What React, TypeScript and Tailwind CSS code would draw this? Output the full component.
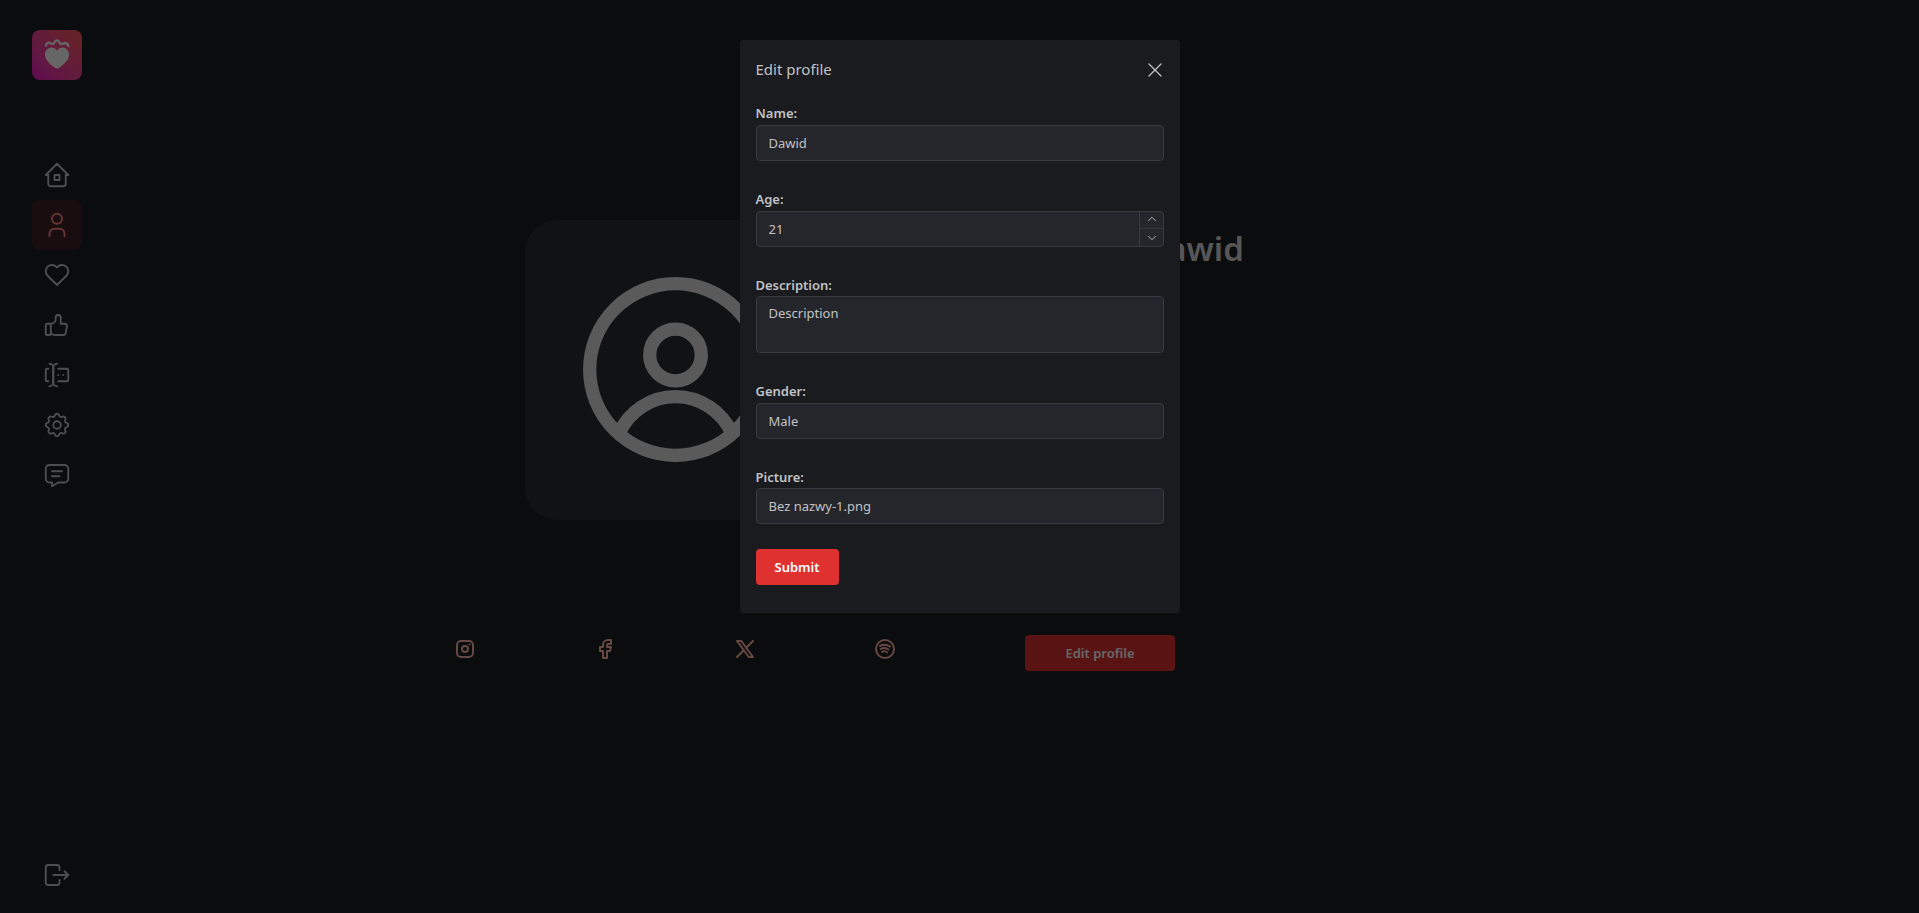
import {
  TbBrandFacebook,
  TbBrandInstagram,
  TbBrandSpotify,
  TbBrandX,
  TbChevronDown,
  TbChevronUp,
  TbForms,
  TbHeart,
  TbHome2,
  TbLogout,
  TbMessage,
  TbSettings,
  TbThumbUp,
  TbUser,
  TbX,
} from "react-icons/tb";

const navItems = [
  { icon: TbHome2, active: false },
  { icon: TbUser, active: true },
  { icon: TbHeart, active: false },
  { icon: TbThumbUp, active: false },
  { icon: TbForms, active: false },
  { icon: TbSettings, active: false },
  { icon: TbMessage, active: false },
];

const socials = [TbBrandInstagram, TbBrandFacebook, TbBrandX, TbBrandSpotify];

const inputClass =
  "h-9 w-full rounded-[4px] border border-[#373a40] bg-[#25262b] px-3 text-[13px] text-[#c1c2c5] outline-none";

const Logo = () => (
  <div className="flex h-[50px] w-[50px] items-center justify-center rounded-lg bg-gradient-to-tr from-[#f010c8] to-[#ff5a50]">
    <svg width="50" height="50" viewBox="0 0 50 50" fill="none">
      <path
        d="M25 38.5c-1 0-2-.6-3.2-1.5C17 33.5 13 29.500 13 24.500c0-4 3-7 6.500-7 2.300 0 4.300 1.100 5.500 3 1.200-1.900 3.200-3 5.500-3 3.500 0 6.500 3 6.500 7 0 5-4 9-8.800 12.500-1.200.9-2.200 1.500-3.200 1.500z"
        fill="#fff"
      />
      <path
        d="M14 15.500c.5-2.500 2.500-3.500 4-2.500 2 1.300 3.500 1.300 4.500-.5 1-2 2.500-2.800 4-1.500 1 1 1 2.500 2.500 3 1.500.4 2.500-1 3.700-1 1.500 0 3.300 1.200 3.800 3"
        stroke="#fff"
        strokeWidth="2.300"
        strokeLinecap="round"
      />
    </svg>
  </div>
);

const Sidebar = () => (
  <aside className="flex h-[913px] w-[114px] shrink-0 flex-col pb-[13px] pl-8 pt-[30px]">
    <Logo />
    <nav className="mt-[70px] flex flex-col">
      {navItems.map(({ icon: Icon, active }, i) => (
        <div
          key={i}
          className={`flex h-[50px] w-[50px] items-center justify-center rounded-lg ${
            active ? "bg-[#e03131]/20 text-[#ff8787]" : "text-[#c1c2c5]"
          }`}
        >
          <Icon size={30} strokeWidth={1.5} />
        </div>
      ))}
    </nav>
    <div className="mt-auto flex h-[50px] w-[50px] items-center justify-center text-[#c1c2c5]">
      <TbLogout size={30} strokeWidth={1.5} />
    </div>
  </aside>
);

const AvatarIcon = () => (
  <svg width="200" height="200" viewBox="-100.500 -99.500 200 200" fill="none" stroke="#e0e0e0" strokeWidth="13.300">
    <circle cx="0" cy="0" r="85.800" />
    <circle cx="0" cy="-14.500" r="25.800" />
    <path d="M-56.700 64.400A61.800 61.800 0 0 1 56.700 64.400" />
  </svg>
);

const Profile = () => (
  <main className="flex-1 pt-[220px]">
    <div className="flex items-start pl-[411px]">
      <div className="flex h-[300px] w-[300px] items-center justify-center rounded-[32px] bg-[#2c2e33]">
        <AvatarIcon />
      </div>
      <h1 className="ml-[318px] mt-[7px] text-[33px] font-semibold leading-[44px] text-[#d8d8da]">Dawid</h1>
    </div>
    <div className="mt-[115px] flex items-start pl-[339px]">
      {socials.map((Icon, i) => (
        <div key={i} className="mt-[2px] flex w-[140px] justify-start text-[#ffb4a8]">
          <Icon size={24} strokeWidth={2} />
        </div>
      ))}
      <button className="ml-[12px] h-9 w-[150px] rounded-[4px] bg-[#e03131] pt-[1px] text-[13px] font-semibold text-white">
        Edit profile
      </button>
    </div>
  </main>
);

const Field = ({
  label,
  children,
  className = "mb-[28px]",
}: {
  label: string;
  children: React.ReactNode;
  className?: string;
}) => (
  <div className={className}>
    <label className="block text-[13px] font-semibold leading-[21.7px] text-[#c1c2c5]">{label}</label>
    {children}
  </div>
);

const EditModal = () => (
  <div className="fixed inset-0 bg-black/60">
    <div className="flex justify-center pt-10">
      <div className="w-[440px] rounded-[4px] bg-[#1a1b1e] px-4 pb-7">
        <div className="flex h-[63.3px] items-center justify-between pb-[4px]">
          <span className="text-[15px] text-[#c1c2c5]">Edit profile</span>
          <TbX size={24} strokeWidth={1.25} className="mr-[-3px] text-[#c1c2c5]" />
        </div>
        <form>
          <Field label="Name:">
            <input readOnly value="Dawid" className={inputClass} />
          </Field>
          <Field label="Age:">
            <div className="relative">
              <input readOnly value="21" className={inputClass} />
              <div className="absolute bottom-0 right-0 top-0 flex w-[25px] flex-col border-l border-[#373a40] text-[#c1c2c5]">
                <div className="flex flex-1 items-center justify-center border-b border-[#373a40]">
                  <TbChevronUp size={14} strokeWidth={1.5} />
                </div>
                <div className="flex flex-1 items-center justify-center">
                  <TbChevronDown size={14} strokeWidth={1.5} />
                </div>
              </div>
            </div>
          </Field>
          <Field label="Description:">
            <textarea
              readOnly
              value="Description"
              className="block h-[57px] w-full resize-none rounded-[4px] border border-[#373a40] bg-[#25262b] px-3 py-[7px] text-[13px] text-[#c1c2c5] outline-none"
            />
          </Field>
          <Field label="Gender:" className="mb-[27.4px]">
            <input readOnly value="Male" className={inputClass} />
          </Field>
          <Field label="Picture:" className="mb-[24.6px]">
            <input readOnly value="Bez nazwy-1.png" className={inputClass} />
          </Field>
          <button
            type="button"
            className="h-9 w-[83px] rounded-[4px] bg-[#e03131] pt-[1px] text-[13px] font-semibold text-white"
          >
            Submit
          </button>
        </form>
      </div>
    </div>
  </div>
);

export default function App() {
  return (
    <div className="flex h-[913px] overflow-hidden bg-[#1a1e23] font-['Noto_Sans',sans-serif]">
      <Sidebar />
      <Profile />
      <EditModal />
    </div>
  );
}
